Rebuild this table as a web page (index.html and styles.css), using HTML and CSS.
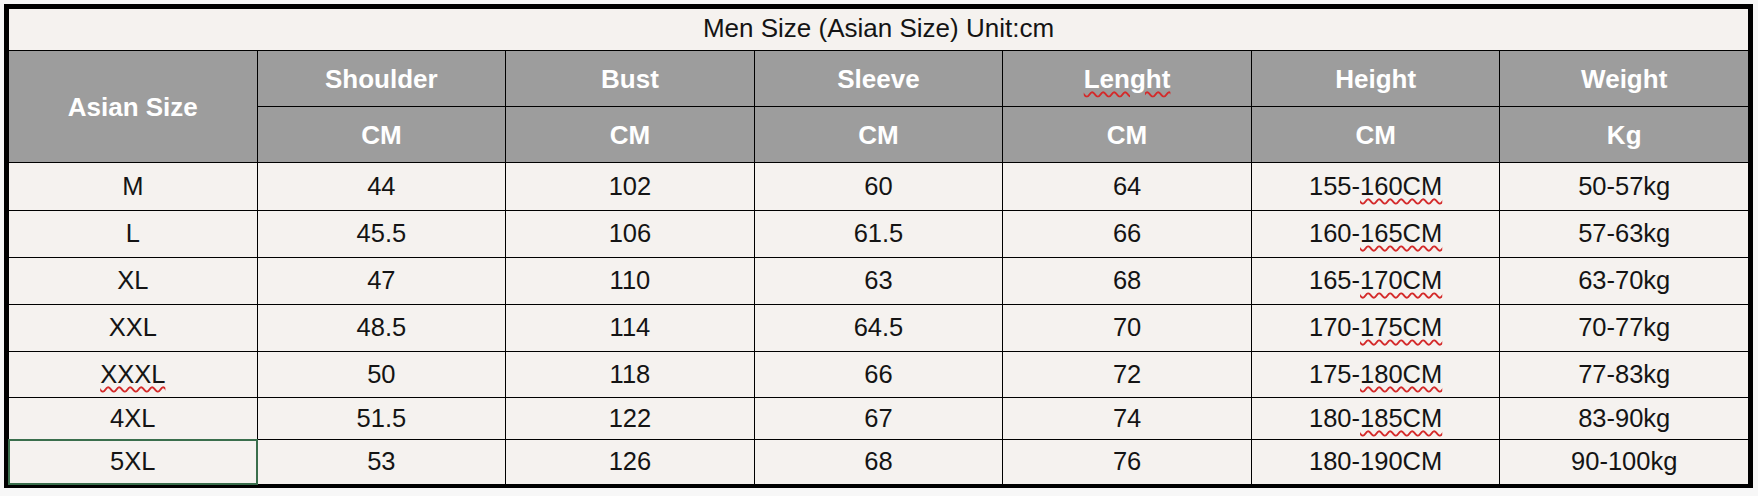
FILE: index.html
```html
<!DOCTYPE html>
<html>
<head>
<meta charset="utf-8">
<title>Men Size Chart</title>
<link rel="stylesheet" href="styles.css">
</head>
<body>
<div class="frame">
  <div class="grid">
    <div class="cell title">Men Size (Asian Size) Unit:cm</div>

    <div class="cell head span2">Asian Size</div>
    <div class="cell head">Shoulder</div>
    <div class="cell head">Bust</div>
    <div class="cell head">Sleeve</div>
    <div class="cell head"><span class="spell">Lenght</span></div>
    <div class="cell head">Height</div>
    <div class="cell head">Weight</div>

    <div class="cell head">CM</div>
    <div class="cell head">CM</div>
    <div class="cell head">CM</div>
    <div class="cell head">CM</div>
    <div class="cell head">CM</div>
    <div class="cell head">Kg</div>

    <div class="cell">M</div><div class="cell">44</div><div class="cell">102</div><div class="cell">60</div><div class="cell">64</div><div class="cell">155-<span class="spell">160CM</span></div><div class="cell">50-57kg</div>
    <div class="cell">L</div><div class="cell">45.5</div><div class="cell">106</div><div class="cell">61.5</div><div class="cell">66</div><div class="cell">160-<span class="spell">165CM</span></div><div class="cell">57-63kg</div>
    <div class="cell">XL</div><div class="cell">47</div><div class="cell">110</div><div class="cell">63</div><div class="cell">68</div><div class="cell">165-<span class="spell">170CM</span></div><div class="cell">63-70kg</div>
    <div class="cell">XXL</div><div class="cell">48.5</div><div class="cell">114</div><div class="cell">64.5</div><div class="cell">70</div><div class="cell">170-<span class="spell">175CM</span></div><div class="cell">70-77kg</div>
    <div class="cell"><span class="spell">XXXL</span></div><div class="cell">50</div><div class="cell">118</div><div class="cell">66</div><div class="cell">72</div><div class="cell">175-<span class="spell">180CM</span></div><div class="cell">77-83kg</div>
    <div class="cell">4XL</div><div class="cell">51.5</div><div class="cell">122</div><div class="cell">67</div><div class="cell">74</div><div class="cell">180-<span class="spell">185CM</span></div><div class="cell">83-90kg</div>
    <div class="cell selected">5XL</div><div class="cell">53</div><div class="cell">126</div><div class="cell">68</div><div class="cell">76</div><div class="cell">180-190CM</div><div class="cell">90-100kg</div>
  </div>
</div>
</body>
</html>
```

FILE: styles.css
```css
* { box-sizing: border-box; }

html, body {
  margin: 0;
  padding: 0;
  background: #f7f7f7;
}

.frame {
  margin: 4px 0 0 4px;
  width: 1749px;
  border-style: solid;
  border-color: #000;
  border-width: 5px 5px 4px 5px;
  background: #000;
}

.grid {
  display: grid;
  grid-template-columns: repeat(7, 1fr);
  grid-template-rows: 41px 55px 55px 47px 46px 46px 46px 45px 41px 44px;
  gap: 1px;
  background: #000;
  font-family: "Liberation Sans", Arial, sans-serif;
}

.cell {
  display: flex;
  align-items: center;
  justify-content: center;
  background: #f5f2ef;
  color: #141414;
  font-size: 25.5px;
  line-height: 1;
  position: relative;
}

.title {
  grid-column: 1 / -1;
  padding-bottom: 3px;
  font-size: 26px;
}

.head {
  background: #9d9d9d;
  color: #fff;
  font-weight: bold;
  font-size: 26px;
}

.span2 {
  grid-row: span 2;
}

.spell {
  text-decoration-line: underline;
  text-decoration-style: wavy;
  text-decoration-color: #d42a2a;
  text-decoration-thickness: 1.5px;
  text-underline-offset: 3px;
}

.selected {
  outline: 1px solid #3a6e4c;
  outline-offset: 0;
  box-shadow: inset 0 0 0 1px #3a6e4c;
  z-index: 1;
}
```
